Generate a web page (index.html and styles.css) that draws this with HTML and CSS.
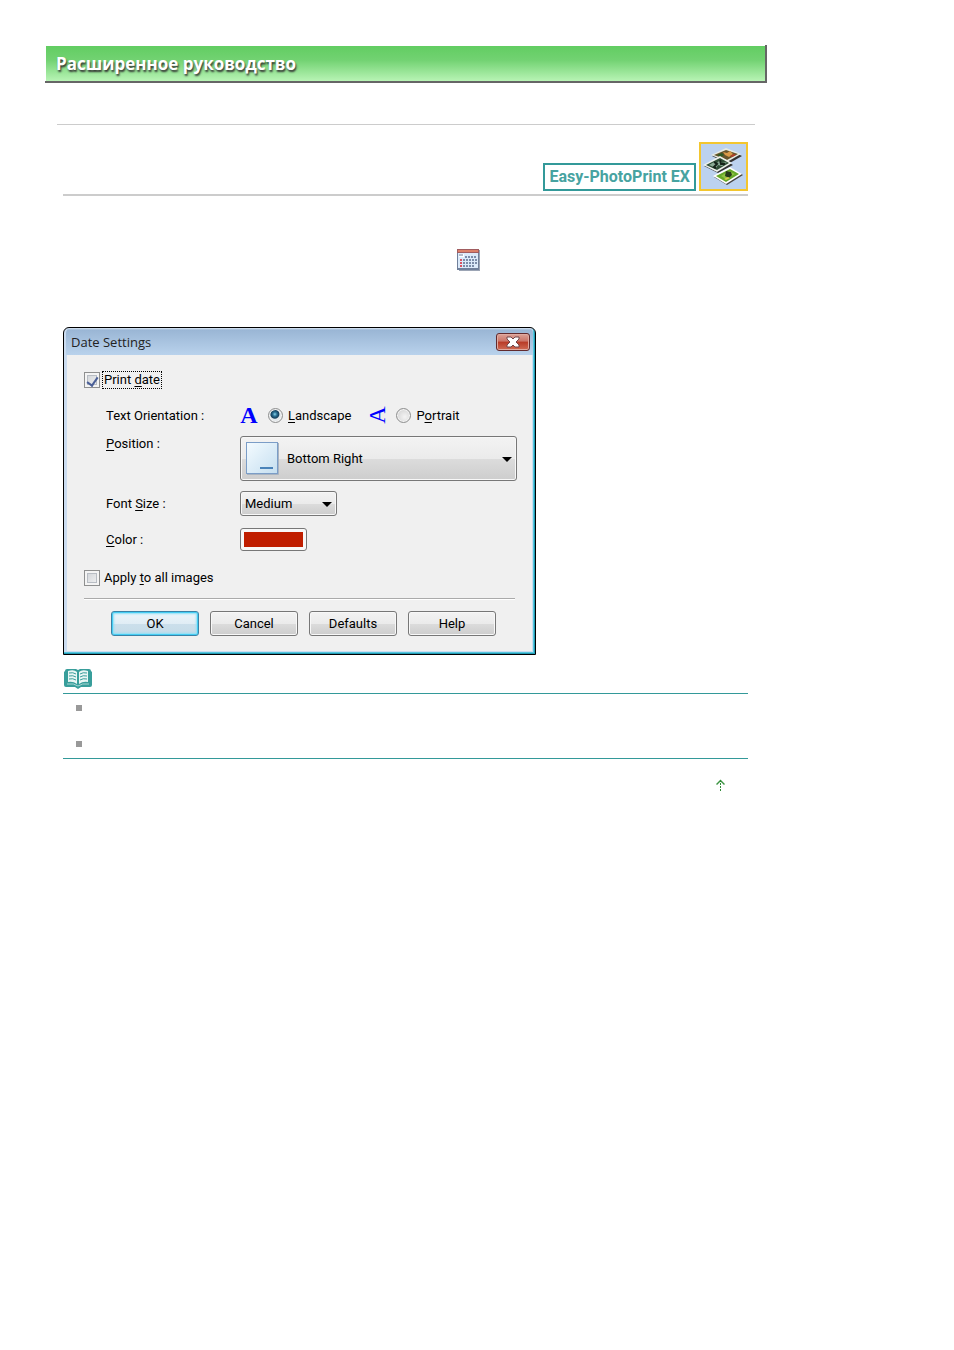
FILE: index.html
```html
<!DOCTYPE html>
<html lang="ru">
<head>
    <meta charset="UTF-8">
    <meta name="viewport" content="width=device-width, initial-scale=1.0">
    <title>Расширенное руководство</title>
    <link rel="stylesheet" href="styles.css">
</head>
<body>

    <div class="page">
        <header class="banner">
            <h1>Расширенное руководство</h1>
        </header>

        <main class="content">
            <div class="app-header">
                <span class="app-name">Easy-PhotoPrint EX</span>
                <svg class="app-icon" viewBox="0 0 49 49" aria-hidden="true">
                    <rect x="1" y="1" width="47" height="47" fill="#bcd2ef" stroke="#f3c62f" stroke-width="2"/>
                    <path d="M13 14l15-7 15 7-14 8z" fill="#333"/>
                    <path d="M12 13l15-7 15 6-14 8z" fill="#e6ebe4"/>
                    <path d="M15 13l12-5 12 4-11 6z" fill="#67552c"/>
                    <path d="M24 10l4 1 3-2 3 3-4 3-4-2z" fill="#d99a49"/>
                    <path d="M18 13l5-2 2 2-3 2z" fill="#2d5a26"/>
                    <path d="M31 14l4-2 2 1-4 2z" fill="#b43d2a"/>
                    <path d="M5 24l17-8 12 7-15 8z" fill="#333"/>
                    <path d="M4 23l17-9 12 7-15 9z" fill="#edf1ec"/>
                    <path d="M7 23l14-7 9 5-12 7z" fill="#304f37"/>
                    <path d="M10 23l5-3 2 2 4-4 2 3 5-1-5 4-4-1-2 3z" fill="#8cab96"/>
                    <path d="M15 20l3 2-3 3 2 1M21 18l1 4 4 0" fill="none" stroke="#152319" stroke-width="2"/>
                    <path d="M15 35l17-9 12 7-16 10z" fill="#444"/>
                    <path d="M14 34l17-9 12 7-16 10z" fill="#fff"/>
                    <path d="M17 34l14-7 9 5-13 8z" fill="#65a829"/>
                    <path d="M22 34l8-5 6 3-9 5z" fill="#8ec342"/>
                    <path d="M27 29l5 1 1 3-3 3-4-2z" fill="#273c1b"/>
                    <path d="M25 37l4-2 2 1-4 2z" fill="#d4cb4c"/>
                </svg>
            </div>

            <div class="intro">
                <svg class="calendar-icon" viewBox="0 0 23 22" aria-hidden="true">
                    <path d="M2 1h21v21H2z" fill="#9ca5b5"/>
                    <path d="M0 0h22v21H0z" fill="#70809b"/>
                    <path d="M1 4h20v15H1z" fill="#dceafa"/>
                    <path d="M0 0h22v4H0z" fill="#a15d60"/>
                    <path d="M1 1h20v2H1z" fill="#dc8069"/>
                    <path d="M2 5h5v3H2z" fill="#fff"/>
                    <path d="M2 6h4" stroke="#6e7891"/>
                    <path d="M8 8h12M6 11h14M6 14h14M6 17h11" stroke="#7c8da9" stroke-width="2" stroke-dasharray="2 1"/>
                    <path d="M4 10v8" stroke="#d65363" stroke-width="2" stroke-dasharray="2 1"/>
                </svg>
            </div>

            <form class="dialog" onsubmit="return false">
                <div class="title-bar">
                    <h2>Date Settings</h2>
                    <button type="button" class="close" aria-label="Close">
                        <svg viewBox="0 0 14 12" aria-hidden="true">
                            <path d="M1 1h4l2 2 2-2h4v2l-3 3 3 3v2H9L7 9l-2 2H1V9l3-3-3-3z" fill="#fff" stroke="#71474a"/>
                        </svg>
                    </button>
                </div>

                <div class="dialog-body">
                    <label class="check-row">
                        <input type="checkbox" checked>
                        <span class="focused">Print <u>d</u>ate</span>
                    </label>

                    <div class="settings">
                        <span id="orientation" class="caption">Text Orientation :</span>
                        <div class="radios" role="radiogroup" aria-labelledby="orientation">
                            <span class="letter">A</span>
                            <label><input type="radio" name="orientation" checked><span><u>L</u>andscape</span></label>
                            <span class="letter turned">A</span>
                            <label><input type="radio" name="orientation"><span>P<u>o</u>rtrait</span></label>
                        </div>

                        <label for="position" class="caption top"><u>P</u>osition :</label>
                        <div class="drop position">
                            <svg class="preview" viewBox="0 0 34 34" aria-hidden="true">
                                <defs>
                                    <linearGradient id="paper" x1="0" y1="0" x2="1" y2="1">
                                        <stop offset="0" stop-color="#f4fbff"/>
                                        <stop offset="1" stop-color="#c5dff0"/>
                                    </linearGradient>
                                </defs>
                                <path d="M2 33.500h31.500V2" fill="none" stroke="#a9b4c1"/>
                                <rect x="1.500" y="1.500" width="31" height="31" fill="url(#paper)" stroke="#7b9dc7"/>
                                <path d="M15 27h13" stroke="#4a83b9" stroke-width="2"/>
                            </svg>
                            <select id="position">
                                <option>Bottom Right</option>
                            </select>
                        </div>

                        <label for="size" class="caption">Font <u>S</u>ize :</label>
                        <div class="drop size">
                            <select id="size">
                                <option>Medium</option>
                            </select>
                        </div>

                        <label for="color" class="caption"><u>C</u>olor :</label>
                        <input type="color" id="color" value="#c01e00">
                    </div>

                    <label class="check-row">
                        <input type="checkbox">
                        <span>Apply <u>t</u>o all images</span>
                    </label>

                    <hr>

                    <div class="buttons">
                        <button type="button" class="primary">OK</button>
                        <button type="button">Cancel</button>
                        <button type="button">Defaults</button>
                        <button type="button">Help</button>
                    </div>
                </div>
            </form>

            <section class="note">
                <svg class="book-icon" viewBox="0 0 28 20" aria-hidden="true">
                    <path d="M3 0h9l2 1 2-1h9q2 0 2 2l1 1v13q0 2-2 2h-9l-3 2-3-2H2q-2 0-2-2V3l1-1q0-2 2-2z" fill="#389e9b"/>
                    <path d="M4 2q6-2 9 1v12q-4-3-9-2zM24 2q-6-2-9 1v12q4-3 9-2z" fill="#e9f6f4"/>
                    <path d="M5 4q4-1 7 1M5 7q4-1 7 1M5 10q4-1 7 1M23 4q-4-1-7 1M23 7q-4-1-7 1M23 10q-4-1-7 1" fill="none" stroke="#389e9b"/>
                    <path d="M3 15q7-1 11 2 4-3 11-2" fill="none" stroke="#a7d6d2"/>
                </svg>
                <ul>
                    <li></li>
                    <li></li>
                </ul>
            </section>

            <div class="to-top">
                <a href="#" aria-label="Наверх">
                    <svg viewBox="0 0 9 12" aria-hidden="true">
                        <path d="M0.500 5.500l4-4 4 4" fill="none" stroke="#3c9442" stroke-width="1.500"/>
                        <path d="M4.500 1v11" stroke="#2f8a36" stroke-dasharray="2 1"/>
                    </svg>
                </a>
            </div>
        </main>
    </div>

</body>
</html>
```

FILE: styles.css
```css
* {
    box-sizing: border-box;
}

body {
    margin: 0;
    background: #fff;
    color: #000;
    font-family: Roboto, Arial, sans-serif;
    font-size: 13px;
}

svg {
    display: block;
}

.page {
    max-width: 722px;
    margin: 45px;
}

.banner {
    padding: 1px 0 0 1px;
    border-right: 2px solid #666;
    border-bottom: 2px solid #666;
}

.banner h1 {
    margin: 0;
    padding: 1px 10px 0;
    background: linear-gradient(#62cd62, #72d272 40%, #b8f4b5);
    color: #fff;
    font-family: "Open Sans", sans-serif;
    font-size: 17px;
    line-height: 34px;
    text-shadow: 1px 2px 2px #333;
}

.content {
    margin: 41px 12px 0;
    padding: 17px 7px 0 6px;
    border-top: 1px solid #ccc;
}

/* application name */
.app-header {
    display: flex;
    justify-content: flex-end;
    align-items: flex-end;
    gap: 3px;
    padding-bottom: 3px;
    border-bottom: 2px solid #ccc;
}

.app-name {
    padding: 0 4px;
    border: 2px solid #339999;
    color: #47a3a1;
    font-size: 16px;
    font-weight: bold;
    line-height: 24px;
}

.app-icon {
    width: 49px;
    height: 49px;
}

.intro {
    display: flex;
    justify-content: center;
    padding: 53px 0 56px 126px;
}

.calendar-icon {
    width: 23px;
    height: 22px;
}

/* dialog window */
.dialog {
    max-width: 473px;
    padding: 0 3px 3px;
    border: 1px solid #000;
    border-radius: 6px 6px 0 0;
    background: #cbdcf0;
    box-shadow: inset -1px -1px #239bb5, inset -2px -2px #55c6dd;
}

.title-bar {
    display: flex;
    justify-content: space-between;
    align-items: center;
    height: 27px;
    margin: 0 -1px;
    padding: 1px 3px 0 5px;
    border-radius: 5px 5px 0 0;
    background: linear-gradient(#dce8f5, #9ab6d5 2px, #b9d2ec);
}

.title-bar h2 {
    margin: 0;
    color: #222;
    font-family: "Open Sans", sans-serif;
    font-size: 13px;
    font-weight: normal;
}

.close {
    display: flex;
    justify-content: center;
    align-items: center;
    width: 34px;
    height: 18px;
    padding: 0;
    border: 1px solid #622a2d;
    border-radius: 3px;
    background: linear-gradient(#dda398, #cb7467 45%, #b83a26 50%, #d06c55);
    box-shadow: inset 0 0 0 1px #e0aaa0;
}

.close svg {
    width: 14px;
    height: 12px;
}

.dialog-body {
    padding: 17px 17px 15px;
    background: #f0f0f0;
}

.check-row {
    display: flex;
    align-items: center;
    gap: 3px;
}

.check-row span {
    padding: 0 1px;
    line-height: 16px;
}

.check-row .focused {
    outline: 1px dotted #000;
}

u {
    text-underline-offset: 2px;
}

input {
    margin: 0;
}

input[type="checkbox"] {
    appearance: none;
    display: flex;
    justify-content: center;
    width: 16px;
    height: 16px;
    padding-top: 2px;
    border: 1px solid #8e8f8f;
    background: linear-gradient(135deg, #ccd0d5, #f5f5f5);
    box-shadow: inset 0 0 0 2px #f4f4f4, inset 0 0 0 3px #b8bdc4;
}

input[type="checkbox"]:checked::before {
    content: "";
    width: 5px;
    height: 9px;
    border: solid #4a5f97;
    border-width: 0 2px 2px 0;
    transform: rotate(35deg);
}

.settings {
    display: grid;
    grid-template-columns: 134px 1fr;
    grid-template-rows: 22px 45px 25px 27px;
    align-items: center;
    gap: 10px 0;
    margin: 16px -2px 17px 0;
    padding-left: 22px;
}

.caption.top {
    align-self: start;
    line-height: 16px;
}

.radios {
    display: flex;
    align-items: center;
}

.radios label {
    display: flex;
    align-items: center;
    gap: 5px;
}

.letter {
    width: 18px;
    margin-right: 10px;
    color: #0000ff;
    font-family: "Liberation Serif", "Times New Roman", serif;
    font-size: 24px;
    font-weight: bold;
    line-height: 20px;
    text-align: center;
}

.letter.turned {
    margin-left: 17px;
    font-weight: normal;
    transform: rotate(-90deg);
}

input[type="radio"] {
    appearance: none;
    width: 15px;
    height: 15px;
    border: 1px solid #8e8f8f;
    border-radius: 50%;
    background: radial-gradient(circle at 60% 60%, #f4f4f4, #ccc);
    box-shadow: inset 0 0 0 1px #f4f4f4;
}

input[type="radio"]:checked {
    background: radial-gradient(circle at 45% 40%, #8ad4ea 0, #2b7196 2px, #153f5c 4px, #e4e8eb 5px);
}

.drop {
    position: relative;
}

.drop::after {
    content: "";
    position: absolute;
    top: 50%;
    right: 5px;
    margin-top: -2px;
    border: 5px solid transparent;
    border-top-color: #000;
    border-bottom: 0;
    pointer-events: none;
}

.drop select {
    appearance: none;
    display: block;
    width: 100%;
    height: 25px;
    padding: 0 20px 0 4px;
    border: 1px solid #777;
    border-radius: 3px;
    background: linear-gradient(#f3f3f3, #ebebeb 50%, #dcdcdc 51%, #cdcdcd);
    box-shadow: inset 0 0 0 1px #f8f8f8;
    color: #000;
    font: inherit;
}

.position {
    max-width: 277px;
}

.position select {
    height: 45px;
    padding-left: 46px;
}

.size {
    width: 97px;
}

.preview {
    position: absolute;
    top: 5px;
    left: 5px;
    width: 34px;
    height: 34px;
    pointer-events: none;
}

input[type="color"] {
    appearance: none;
    width: 67px;
    height: 23px;
    padding: 3px;
    border: 1px solid #777;
    border-radius: 3px;
    background: #f8f8f8;
}

input[type="color"]::-webkit-color-swatch-wrapper {
    padding: 0;
}

input[type="color"]::-webkit-color-swatch {
    border: 0;
}

hr {
    margin: 12px 0 11px;
    border: solid;
    border-width: 1px 0;
    border-color: #aaa transparent #fff;
}

.buttons {
    display: flex;
    justify-content: center;
    gap: 11px;
    padding-left: 8px;
}

.buttons button {
    width: 88px;
    height: 25px;
    padding: 0;
    border: 1px solid #777;
    border-radius: 3px;
    background: linear-gradient(#f3f3f3, #ebebeb 50%, #dcdcdc 51%, #cdcdcd);
    box-shadow: inset 0 0 0 1px #f8f8f8;
    color: #000;
    font: inherit;
}

.buttons .primary {
    border-color: #3a82a6;
    background: linear-gradient(#eef5f9, #e0edf5 50%, #cbdfeb 51%, #c5dbe8);
    box-shadow: inset 0 0 0 1px #45cdf3, inset 0 0 2px 2px #8fdff6;
}

/* notes */
.note {
    margin-top: 14px;
}

.book-icon {
    width: 28px;
    height: 20px;
    margin: 0 0 4px 1px;
}

.note ul {
    margin: 0;
    padding: 11px 13px;
    border: solid #339999;
    border-width: 1px 0;
    list-style: none;
}

.note li {
    height: 6px;
}

.note li + li {
    margin-top: 30px;
}

.note li::before {
    content: "";
    display: block;
    width: 6px;
    height: 6px;
    background: #999;
}

.to-top {
    display: flex;
    justify-content: flex-end;
    padding: 20px 23px 0;
}

.to-top svg {
    width: 9px;
    height: 12px;
}
```
